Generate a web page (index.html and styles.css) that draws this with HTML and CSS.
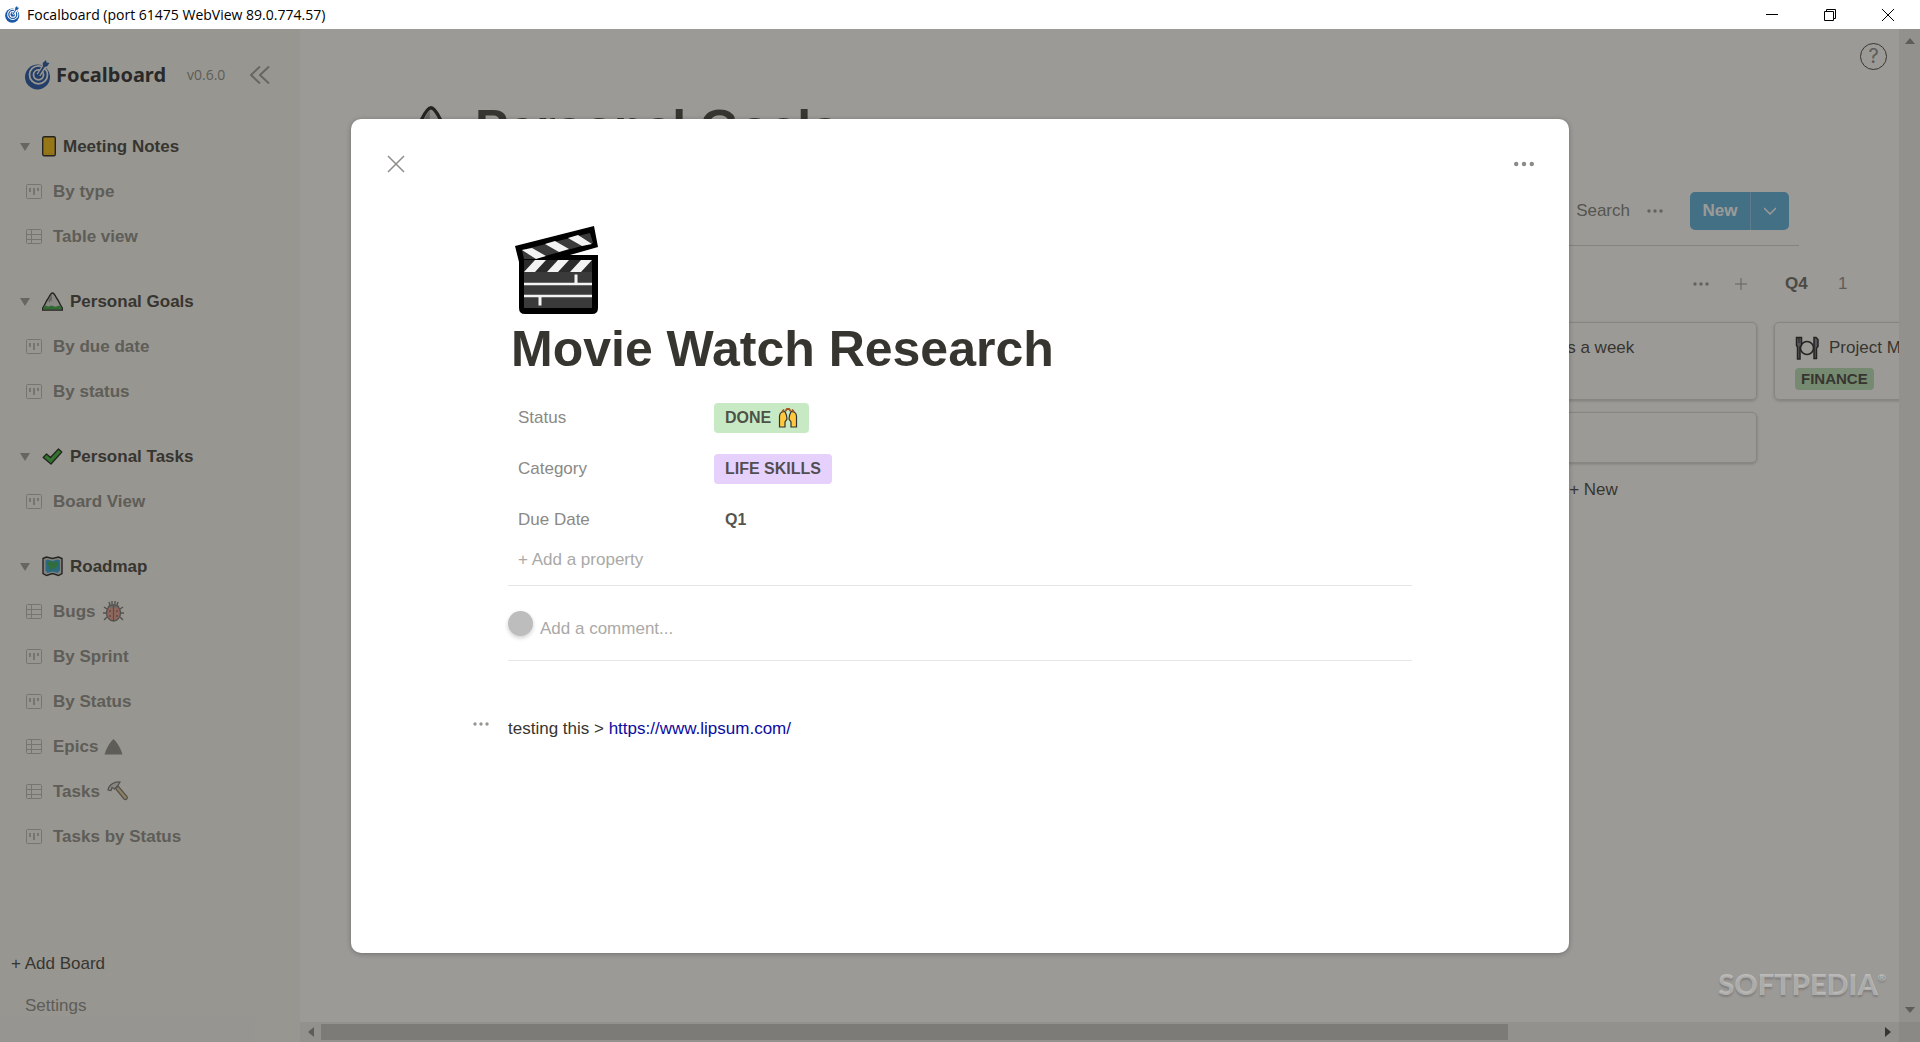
FILE: index.html
```html
<!DOCTYPE html>
<html lang="en">
<head>
<meta charset="utf-8">
<title>Focalboard</title>
<link rel="stylesheet" href="styles.css">
</head>
<body>
<svg class="defs" aria-hidden="true">
  <symbol id="logo" viewBox="0 0 26 30">
    <circle cx="12.500" cy="17" r="12.500" fill="currentColor"/>
    <circle cx="13.500" cy="14.800" r="9" fill="none" stroke="var(--ring)" stroke-width="1.800"/>
    <circle cx="13.500" cy="14.800" r="5" fill="none" stroke="var(--ring)" stroke-width="1.800"/>
    <path d="M13.500 15L20.500 4.500" stroke="var(--ring)" stroke-width="4.500"/>
    <path d="M13.500 15L20.500 4" stroke="currentColor" stroke-width="1.800"/>
    <path d="M18 7l-.3-4L21 0l.5 2.500 3 .5-2.500 3.500z" fill="currentColor"/>
  </symbol>
  <symbol id="board" viewBox="0 0 16 16">
    <rect x=".5" y=".5" width="15" height="14" rx="1" fill="none" stroke="currentColor"/>
    <path d="M4 4v4M8 4v7M12 4v3" stroke="currentColor" stroke-width="2"/>
  </symbol>
  <symbol id="table" viewBox="0 0 16 16">
    <rect x=".5" y=".5" width="15" height="14" rx="1" fill="none" stroke="currentColor"/>
    <path d="M1 5.500h14M1 10.500h14M5.500 1v13" stroke="currentColor"/>
  </symbol>
  <symbol id="dots" viewBox="0 0 20 20">
    <circle cx="4" cy="10" r="1.700" fill="currentColor"/><circle cx="10" cy="10" r="1.700" fill="currentColor"/><circle cx="16" cy="10" r="1.700" fill="currentColor"/>
  </symbol>
  <symbol id="mountain" viewBox="0 0 21 21">
    <path d="M.7 19v-2C3 14 4 10 6.500 7c1.500-3 3-5 4-5s2.500 2 4 5c2.500 3 3.500 7 5.800 10v2z" fill="#ddd" stroke="#111" stroke-width="1.400"/>
    <path d="M6 9l1.500 3L9 9l1 2V3L8 6z" fill="#999"/>
    <path d="M1.400 18.300v-1.300l1.900-2.500 3 1 3-1 4 1.300 4.300-1.300 2 2.500v1.300z" fill="#27a033"/>
  </symbol>
</svg>

<header class="titlebar">
  <svg class="titlebar-logo"><use href="#logo"/></svg>
  <span class="titlebar-text">Focalboard (port 61475 WebView 89.0.774.57)</span>
  <button class="window-button" aria-label="Minimize"><svg viewBox="0 0 12 12"><path d="M0 5.500h12"/></svg></button>
  <button class="window-button" aria-label="Restore"><svg viewBox="0 0 12 12"><path d="M.5 2.500h9v9h-9zM2.500 2V.5h9v9H10"/></svg></button>
  <button class="window-button" aria-label="Close window"><svg viewBox="0 0 12 12"><path d="M0 0l12 12M12 0L0 12"/></svg></button>
</header>

<div class="app">
  <nav class="sidebar">
    <div class="brand">
      <svg class="brand-logo"><use href="#logo"/></svg>
      <span class="brand-name">Focalboard</span>
      <span class="brand-version">v0.6.0</span>
      <button class="collapse" aria-label="Hide sidebar"><svg viewBox="0 0 20 18"><path d="M10 .5L1 9l9 8.500M19 .5L10 9l9 8.500"/></svg></button>
    </div>

    <div class="group">
      <button class="group-title"><i class="caret"></i><svg class="emoji notebook" viewBox="0 0 14 21"><rect x=".7" y=".7" width="12.600" height="19" rx="1.500" fill="#f5b800" stroke="#111" stroke-width="1.400"/><path d="M3.500 17.500h7" stroke="#c08a00" stroke-dasharray="1 2"/></svg>Meeting Notes</button>
      <a class="view" href="#"><svg><use href="#board"/></svg>By type</a>
      <a class="view" href="#"><svg><use href="#table"/></svg>Table view</a>
    </div>
    <div class="group">
      <button class="group-title"><i class="caret"></i><svg class="emoji"><use href="#mountain"/></svg>Personal Goals</button>
      <a class="view" href="#"><svg><use href="#board"/></svg>By due date</a>
      <a class="view" href="#"><svg><use href="#board"/></svg>By status</a>
    </div>
    <div class="group">
      <button class="group-title"><i class="caret"></i><svg class="emoji" viewBox="0 0 21 21"><path d="M1.200 11.500L4.500 8l4 3.500L16.500 3l3.300 3L9 18z" fill="#2db52d" stroke="#111" stroke-width="1.300" stroke-linejoin="round"/></svg>Personal Tasks</button>
      <a class="view" href="#"><svg><use href="#board"/></svg>Board View</a>
    </div>
    <div class="group">
      <button class="group-title"><i class="caret"></i><svg class="emoji" viewBox="0 0 21 21"><path d="M1 2.500l3.500-1.500 6 1.500L16.500 1 20 2.500v15l-3.500 2-6-2-6 2L1 17.500z" fill="#ccc" stroke="#111" stroke-width="1.400"/><path d="M3.500 4.500l2-1 5 1.500 5-1.500 2.500 1v10l-2.500 2.500-5-1.500-5 1.500-2-2.500z" fill="#1c9cd0"/><path d="M5 6l4-.5 2 1 4-1 1 3.500-3 4-2-1-2 3-2-4z" fill="#28a745"/></svg>Roadmap</button>
      <a class="view" href="#"><svg><use href="#table"/></svg>Bugs <svg class="emoji faded" viewBox="0 0 21 21"><path d="M4 8L1 6M3 12H0M4 16l-3 3M17 8l3-2M18 12h3M17 16l3 3M7 4L6 1M14 4l1-3M9 3V0M12 3V0" stroke="#333" stroke-width="1.400"/><ellipse cx="10.500" cy="12" rx="7" ry="8" fill="#e8705c" stroke="#333" stroke-width="1.300"/><path d="M5 6.500C6 3 15 3 16 6.500M10.500 5v15" fill="#777" stroke="#333" stroke-width="1.200"/><path d="M7 9v2M14 9v2M7 14v2M14 14v2" stroke="#333" stroke-width="1.500"/></svg></a>
      <a class="view" href="#"><svg><use href="#board"/></svg>By Sprint</a>
      <a class="view" href="#"><svg><use href="#board"/></svg>By Status</a>
      <a class="view" href="#"><svg><use href="#table"/></svg>Epics <svg class="emoji epic" viewBox="0 0 21 21"><path d="M1.500 18.500C3.500 12 6.500 6.500 10.500 3c4 3.500 7 9 9 15.500z" fill="currentColor"/></svg></a>
      <a class="view" href="#"><svg><use href="#table"/></svg>Tasks <svg class="emoji faded" viewBox="0 0 21 21"><path d="M8.500 7.500l2.500-2.500 9 10.500c1 2-1 4-3 2.500z" fill="#dcb866" stroke="#333" stroke-width="1.200"/><path d="M1 9C1.500 4 7 .5 13 1l-2.500 4-3 3L5 6.500l-1 3z" fill="#ccc" stroke="#333" stroke-width="1.200"/></svg></a>
      <a class="view" href="#"><svg><use href="#board"/></svg>Tasks by Status</a>
    </div>

    <div class="sidebar-foot">
      <button class="add-board">+ Add Board</button>
      <button class="settings">Settings</button>
    </div>
  </nav>

  <main class="workspace">
    <div class="board">
      <button class="help" aria-label="Help">?</button>
      <h1 class="board-title"><svg class="board-icon"><use href="#mountain"/></svg>Personal Goals</h1>
      <div class="toolbar">
        <button class="plain">Search</button>
        <button class="icon-button" aria-label="View options"><svg><use href="#dots"/></svg></button>
        <div class="new-button">
          <button class="new-main">New</button>
          <button class="new-more" aria-label="More templates"><svg viewBox="0 0 12 8"><path d="M0 1l6 6 6-6"/></svg></button>
        </div>
      </div>
      <div class="columns">
        <section class="column"></section>
        <section class="column"></section>
        <section class="column"></section>
        <section class="column">
          <div class="column-head column-tools">
            <button class="icon-button" aria-label="Column options"><svg><use href="#dots"/></svg></button>
            <button class="icon-button" aria-label="Add card"><svg viewBox="0 0 20 20"><path d="M10 4v12M4 10h12" stroke="currentColor"/></svg></button>
          </div>
          <article class="card card-tall"><div class="card-title"><span class="card-icon"></span>Run 3 times a week</div></article>
          <article class="card card-short"></article>
          <button class="add-card">+ New</button>
        </section>
        <section class="column">
          <div class="column-head"><b class="column-name">Q4</b><span class="column-count">1</span></div>
          <article class="card card-tall">
            <div class="card-title"><svg class="card-icon" viewBox="0 0 24 24"><circle cx="12" cy="12" r="6.500" fill="none" stroke="#111" stroke-width="1.500"/><path d="M1.500 1.500h5v8L5 11v12H2.500V11l-1-1.500zM19 1.500h2l2 2v7L21.500 12v10.500H19z" fill="#778" stroke="#111" stroke-width="1.500"/><path d="M4 2v5" stroke="#111"/></svg>Project M</div>
            <span class="tag">FINANCE</span>
          </article>
        </section>
      </div>
    </div>
    <div class="scroll-y" aria-hidden="true">
      <svg viewBox="0 0 10 6"><path d="M0 6l5-6 5 6z"/></svg>
      <svg viewBox="0 0 10 6"><path d="M0 0l5 6 5-6z"/></svg>
    </div>
    <div class="scroll-x" aria-hidden="true">
      <svg viewBox="0 0 6 10"><path d="M6 0L0 5l6 5z"/></svg>
      <div class="scroll-thumb"></div>
      <svg class="arrow-dark" viewBox="0 0 6 10"><path d="M0 0l6 5-6 5z"/></svg>
    </div>
    <div class="scroll-corner"></div>
  </main>

  <div class="overlay">
    <div class="dialog" role="dialog" aria-label="Movie Watch Research">
      <div class="dialog-bar">
        <button class="dialog-button" aria-label="Close dialog"><svg viewBox="0 0 20 20"><path d="M2 2l16 16M18 2L2 18" stroke="currentColor" stroke-width="1.500"/></svg></button>
        <button class="dialog-button" aria-label="Card options"><svg class="dots-large"><use href="#dots"/></svg></button>
      </div>
      <div class="dialog-body">
        <svg class="clapper" viewBox="0 0 84 88">
          <path d="M0 20L79 0l4 21-28 8h28v53q0 6-6 6H10q-6 0-6-6V36z" fill="#000"/>
          <path d="M7 24L75 7l3 10-59 16H9z" fill="#3a3a3a"/>
          <path d="M7 24l10-2 14 8-10 3zM30 18l10-3 14 8-10 3zM53 12l10-3 14 9-10 2z" fill="#f3f3f3"/>
          <path d="M9 34h68v48H9z" fill="#3a3a3a"/>
          <path d="M9 34h68v12H9z" fill="#2b2b2b"/>
          <path d="M9 46l11-12h11L20 46zM32 46l11-12h11L43 46zM55 46l11-12h11L66 46z" fill="#f3f3f3"/>
          <path d="M9 58h68M9 70h68" stroke="#f3f3f3" stroke-width="2.500"/>
          <path d="M61 48.500V58M25 70v9.500" stroke="#f3f3f3" stroke-width="3"/>
        </svg>
        <h2 class="dialog-title">Movie Watch Research</h2>
        <dl class="properties">
          <dt>Status</dt>
          <dd><button class="chip chip-green">DONE <svg class="hands" viewBox="0 0 20 20"><path d="M1.500 19V8.500C1.500 5 4 3.500 7 3.500L8.500 7.500 9 11l-2 3v5zM18.500 19V8.500c0-3.500-2.500-5-5.500-5L11.500 7.500 11 11l2 3v5z" fill="#ffc83d" stroke="#333" stroke-width="1.200"/><path d="M4 4l2-2.500M7.500 3L9 1h2l1.500 2M14 1.500L16 4" fill="none" stroke="#a4541d" stroke-width="2"/></svg></button></dd>
          <dt>Category</dt>
          <dd><button class="chip chip-purple">LIFE SKILLS</button></dd>
          <dt>Due Date</dt>
          <dd><button class="chip">Q1</button></dd>
        </dl>
        <button class="add-property">+ Add a property</button>
        <div class="comment">
          <span class="avatar"></span>
          <input class="comment-input" type="text" placeholder="Add a comment..." aria-label="Add a comment">
        </div>
        <div class="content-block">
          <button class="block-menu" aria-label="Block options"><svg><use href="#dots"/></svg></button>
          <p>testing this &gt; <a href="https://www.lipsum.com/">https://www.lipsum.com/</a></p>
        </div>
      </div>
    </div>
  </div>
  <div class="watermark">SOFTPEDIA<sup>®</sup></div>
</div>
</body>
</html>
```
FILE: styles.css
```css
* { box-sizing: border-box; }

html, body { height: 100%; }

body {
  margin: 0;
  display: flex;
  flex-direction: column;
  overflow: hidden;
  background: #fff;
  color: rgb(55, 53, 47);
  font: 17px/30px "Liberation Sans", Arial, sans-serif;
}

button, input {
  margin: 0;
  padding: 0;
  border: 0;
  background: none;
  color: inherit;
  font: inherit;
}

.defs { position: absolute; width: 0; height: 0; }

/* Window title bar */
.titlebar {
  flex: none;
  display: flex;
  align-items: center;
  height: 29px;
  padding: 0 3px 0 5px;
  color: #000;
  font: 14px/28px "Open Sans", sans-serif;
}
.titlebar-logo { width: 15px; height: 17px; color: #1c58a8; --ring: #fff; }
.titlebar-text { flex: 1; margin-left: 7px; }
.window-button { display: grid; place-items: center; width: 58px; height: 28px; }
.window-button svg { width: 12px; height: 12px; fill: none; stroke: #000; }

.app {
  flex: 1;
  position: relative;
  display: flex;
  min-height: 0;
}

/* Sidebar */
.sidebar {
  flex: none;
  display: flex;
  flex-direction: column;
  width: 300px;
  padding: 31px 0 15px;
  background: rgb(247, 246, 243);
}
.brand { display: flex; align-items: center; height: 30px; margin-bottom: 34px; padding-left: 25px; }
.brand-logo { width: 26px; height: 30px; color: #0e46a0; --ring: #f7f6f3; }
.brand-name { width: 131px; margin-left: 5px; color: #1b1d22; font: bold 20px/30px "Noto Sans", sans-serif; }
.brand-version { width: 63px; color: #85847e; font: 14px/30px "Open Sans", sans-serif; }
.collapse { display: flex; color: #979691; }
.collapse svg { width: 20px; height: 18px; fill: none; stroke: currentColor; stroke-width: 2; }

.group { display: flex; flex-direction: column; margin-bottom: 20px; }
.group-title {
  display: flex;
  align-items: center;
  height: 45px;
  padding-left: 20px;
  font-weight: bold;
}
.caret {
  margin-right: 12px;
  border: 5px solid transparent;
  border-width: 8px 5px 0;
  border-top-color: #979691;
}
.emoji { width: 21px; height: 21px; margin-right: 7px; }
.notebook { width: 14px; }
.view {
  display: flex;
  align-items: center;
  height: 45px;
  padding-left: 26px;
  color: #85847e;
  font-weight: bold;
  text-decoration: none;
}
.view > svg:first-child { width: 16px; height: 16px; margin-right: 11px; color: #b5b4b0; }
.view .emoji { margin-left: 7px; }
.view .epic { margin-left: 5px; }
.faded { opacity: .7; }
.sidebar-foot { display: flex; flex-direction: column; margin-top: auto; text-align: left; }
.add-board { height: 42px; padding-left: 11px; text-align: left; }
.settings { height: 42px; padding-left: 25px; text-align: left; color: #85847e; }

/* Board */
.workspace {
  flex: 1;
  display: grid;
  grid-template: minmax(0, 1fr) 20px / minmax(0, 1fr) 21px;
  min-width: 0;
}
.board { position: relative; overflow: hidden; padding: 69px 100px 0 98px; }
.help {
  position: absolute;
  top: 14px;
  right: 12px;
  width: 27px;
  height: 27px;
  border: 1px solid #37352f;
  border-radius: 50%;
  color: #85847e;
  font: 20px/25px Inter, sans-serif;
}
.board-title {
  display: flex;
  align-items: center;
  height: 60px;
  margin: 0 0 34px 8px;
  font-size: 50px;
  line-height: 60px;
}
.board-icon { width: 50px; height: 50px; margin-right: 19px; }
.toolbar {
  display: flex;
  align-items: center;
  justify-content: flex-end;
  padding: 0 10px 15px 0;
  border-bottom: 1px solid #d0cfcc;
}
.plain { margin-right: 10px; color: #75746e; }
.icon-button { display: grid; place-items: center; width: 30px; height: 30px; color: #8f8e8a; }
.icon-button svg { width: 20px; height: 20px; }
.new-button {
  display: flex;
  height: 38px;
  margin-left: 20px;
  border-radius: 5px;
  background: rgb(80, 170, 221);
  color: #fff;
}
.new-main { width: 61px; border-right: 1px solid #84c3e6; font-weight: bold; }
.new-more { display: grid; place-items: center; width: 38px; }
.new-more svg { width: 12px; height: 8px; fill: none; stroke: #fff; stroke-width: 1.5; }

.columns { display: flex; gap: 17px; }
.column { flex: none; display: flex; flex-direction: column; gap: 12px; width: 327px; }
.column-head { display: flex; align-items: center; height: 64px; padding: 12px 1px 0 11px; }
.column-tools { justify-content: flex-end; gap: 10px; }
.column-name { width: 53px; color: #5f5e58; }
.column-count { color: #85847e; }
.card {
  padding: 10px 20px;
  border: 1px solid #d5d4d1;
  border-radius: 5px;
  box-shadow: 0 1px 3px rgba(55, 53, 47, .3);
}
.card-tall { height: 78px; }
.card-short { height: 51px; }
.card-title { display: flex; align-items: center; }
.card-icon { width: 24px; height: 24px; margin-right: 10px; }
.tag {
  display: block;
  width: max-content;
  margin-top: 5px;
  padding: 0 6px;
  border-radius: 4px;
  background: #b4dfb4;
  font-size: 15px;
  font-weight: bold;
  line-height: 22px;
}
.add-card { align-self: center; }

/* Scroll bars */
.scroll-y, .scroll-x { display: flex; align-items: center; justify-content: space-between; background: #ececea; }
.scroll-y { flex-direction: column; padding: 9px 0; }
.scroll-x { padding: 0 8px; gap: 7px; }
.scroll-y svg { width: 10px; height: 6px; fill: #85847e; }
.scroll-x svg { width: 6px; height: 10px; fill: #85847e; }
.scroll-x .arrow-dark { margin-left: auto; fill: #37352f; }
.scroll-thumb { width: 75%; height: 16px; background: #c1c1c1; }
.scroll-corner { background: #dcdcda; }

/* Card dialog */
.overlay {
  position: absolute;
  inset: 0;
  display: grid;
  justify-items: center;
  padding: 90px 0 89px;
  background: rgba(55, 53, 47, .5);
}
.dialog {
  width: 90%;
  max-width: 1218px;
  overflow: hidden;
  border-radius: 10px;
  background: #fff;
  box-shadow: 0 1px 5px rgba(15, 15, 15, .3);
}
.dialog-bar { display: flex; justify-content: space-between; padding: 30px 30px 0; }
.dialog-button { display: grid; place-items: center; width: 30px; height: 30px; color: #8c8b88; }
.dialog-button svg { width: 20px; height: 20px; }
.dialog-button .dots-large { width: 26px; height: 26px; }
.dialog-body { padding: 47px 157px 0; }
.clapper { display: block; width: 84px; height: 88px; margin-left: 7px; }
.dialog-title { margin: 5px 0 24px 3px; font-size: 50px; line-height: 60px; }
.properties {
  display: grid;
  grid-template-columns: 196px 1fr;
  row-gap: 21px;
  margin: 0 0 10px;
  padding-left: 10px;
}
.properties dt { color: #8a8985; }
.properties dd { margin: 0; height: 30px; }
.chip {
  display: flex;
  align-items: center;
  gap: 7px;
  height: 30px;
  padding: 0 11px;
  border-radius: 4px;
  color: rgba(55, 53, 47, .85);
  font-size: 16px;
  font-weight: bold;
}
.chip-green { background: #c7eac5; }
.chip-purple { background: #e5d1fc; }
.hands { width: 20px; height: 20px; }
.add-property {
  display: block;
  width: 100%;
  height: 41px;
  padding: 0 0 10px 10px;
  border-bottom: 1px solid #e6e6e5;
  color: #aaa9a7;
  text-align: left;
}
.comment {
  display: flex;
  padding: 25px 0 15px;
  border-bottom: 1px solid #e6e6e5;
}
.avatar {
  width: 25px;
  height: 25px;
  border-radius: 50%;
  background: #bdbdbd;
  box-shadow: 0 2px 4px rgba(15, 15, 15, .2);
}
.comment-input { flex: 1; height: 34px; padding: 2px 0 0 7px; outline: 0; }
.comment-input::placeholder { color: #aaa9a7; opacity: 1; }
.content-block { display: flex; margin: 53px 0 0 -37px; }
.content-block p { margin: 0; }
.content-block a { color: #0b0ba0; text-decoration: none; }
.block-menu { width: 37px; height: 20px; color: #979691; text-align: left; line-height: 20px; }
.block-menu svg { display: block; width: 20px; height: 20px; }

.watermark {
  position: absolute;
  right: 34px;
  bottom: 41px;
  color: rgba(255, 255, 255, .36);
  font: 900 29px/34px Lato, sans-serif;
  text-shadow: 0 2px 2px rgba(0, 0, 0, .18);
}
.watermark sup { font-size: 10px; line-height: 10px; vertical-align: 14px; }
```
